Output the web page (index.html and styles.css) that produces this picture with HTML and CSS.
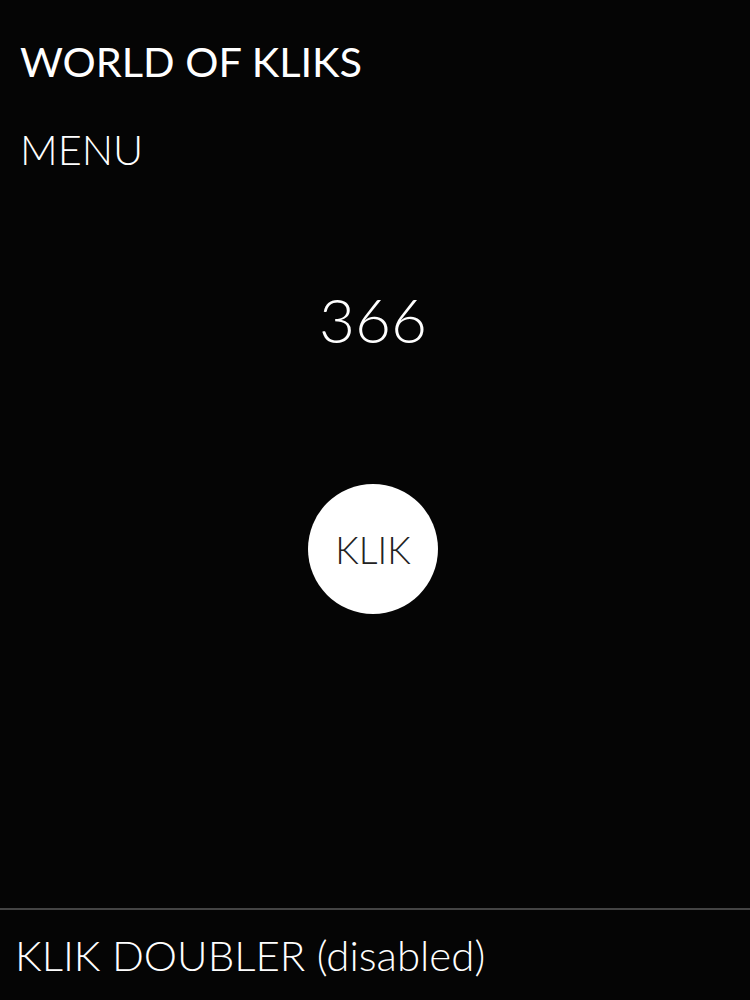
FILE: index.html
```html
<!DOCTYPE html>
<html>
<head>
<meta charset="utf-8">
<link rel="stylesheet" href="styles.css">
</head>
<body>
<div class="app">
  <header class="top">
    <h1 class="title">WORLD OF KLIKS</h1>
    <div class="menu">MENU</div>
  </header>
  <main class="game">
    <div class="count">366</div>
    <button class="klik">KLIK</button>
  </main>
  <footer class="bottom">
    <div class="upgrade">KLIK DOUBLER (disabled)</div>
  </footer>
</div>
</body>
</html>
```
FILE: styles.css
```css
html, body {
  margin: 0;
  padding: 0;
  background: #050505;
}
body {
  font-family: Lato, "Open Sans", sans-serif;
  color: #fff;
}
.app {
  width: 750px;
  height: 1000px;
  display: flex;
  flex-direction: column;
}
.top {
  padding: 35px 20px 0;
}
.title {
  margin: 0;
  font-size: 41.5px;
  font-weight: 400;
  line-height: 52px;
}
.menu {
  margin-top: 36px;
  font-size: 41.5px;
  font-weight: 300;
  line-height: 52px;
}
.game {
  flex: 1;
  display: flex;
  flex-direction: column;
  align-items: center;
  padding-right: 4px;
}
.count {
  margin-top: 107px;
  font-size: 62px;
  font-weight: 300;
  line-height: 74px;
}
.klik {
  margin-top: 128px;
  width: 130px;
  height: 130px;
  border-radius: 50%;
  border: none;
  background: #fff;
  color: #222;
  font-family: Lato, sans-serif;
  font-size: 37px;
  font-weight: 300;
  padding: 0;
}
.bottom {
  border-top: 2px solid #444;
  height: 90px;
  padding: 0 20px;
  display: flex;
  align-items: center;
}
.upgrade {
  font-size: 42px;
  font-weight: 300;
  margin-left: -5px;
}
```
